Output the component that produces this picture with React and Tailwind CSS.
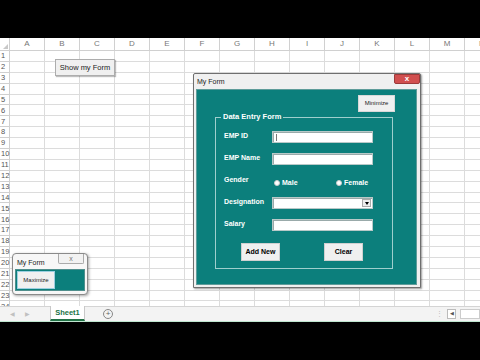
const COLS = ['A', 'B', 'C', 'D', 'E', 'F', 'G', 'H', 'I', 'J', 'K', 'L', 'M', 'N']
const ROWS = Array.from({ length: 24 }, (_, i) => i + 1)

function SheetGrid() {
  return (
    <div className="flex flex-col">
      <div className="flex h-[13px] shrink-0 bg-white">
        <div className="relative w-[10px] shrink-0 border-r border-b border-[#d0d0d0]">
          <div className="absolute right-[1px] bottom-[1px] h-0 w-0 border-l-[5px] border-t-[5px] border-l-transparent border-t-transparent border-r-0 border-b-[5px] border-b-[#c8c8c8] border-r-transparent" />
        </div>
        {COLS.map((c) => (
          <div key={c} className="flex w-[35px] shrink-0 items-center justify-center border-r border-b border-[#d0d0d0] text-[8px] text-[#777]">
            {c}
          </div>
        ))}
      </div>
      {ROWS.map((r) => (
        <div key={r} className="flex h-[10.9px] shrink-0">
          <div className="flex w-[10px] shrink-0 items-center pl-[1px] border-r border-b border-[#d0d0d0] text-[7.5px] leading-none text-[#555]">
            {r}
          </div>
          {COLS.map((c) => (
            <div key={c} className="w-[35px] shrink-0 border-r border-b border-[#dcdcdc]" />
          ))}
        </div>
      ))}
    </div>
  )
}

function TextBox({ cursor }) {
  return (
    <div className="flex h-[12px] w-[101px] items-center border border-[#b9c9c8] bg-white pl-[3px] shadow-[inset_1px_1px_0_#9aa]">
      {cursor && <div className="h-[7px] w-px bg-[#777]" />}
    </div>
  )
}

function Radio({ label }) {
  return (
    <div className="flex items-center gap-[2px]">
      <div className="h-[6px] w-[6px] rounded-full border border-[#ccc] bg-white" />
      <span className="text-[7px] font-bold text-white">{label}</span>
    </div>
  )
}

function FormWindow() {
  return (
    <div className="absolute left-[193px] top-[35px] flex h-[215px] w-[228px] flex-col rounded-t-[2px] border border-[#6f6f6f] bg-[#f0f0f0] pl-[2px] pr-[3px] pb-[2px] shadow-[1px_1px_2px_rgba(0,0,0,0.4)]">
      <div className="flex h-[15px] shrink-0 items-start justify-between">
        <span className="pl-[1px] pt-[4px] text-[7px] leading-none text-[#222]">My Form</span>
        <div className="mr-[-3px] flex h-[10px] w-[26px] items-center justify-center rounded-b-[2px] border border-[#9c3a3a] bg-[#d14f4f] text-[8px] font-bold leading-none text-white">
          x
        </div>
      </div>
      <div className="flex flex-1 flex-col border border-[#5e9c9a] bg-[#0c7f7c]">
        <div className="flex justify-end pr-[21px] pt-[5px]">
          <div className="flex h-[17px] w-[37px] items-center justify-center border border-[#d8d8d8] bg-[#f0f0f0] text-[6px] text-[#222]">
            Minimize
          </div>
        </div>
        <div className="relative ml-[18px] mt-[5px] flex h-[152px] w-[178px] flex-col border-[1.5px] border-[#9fcfcd] pl-[8px] pt-[13px]">
          <span className="absolute left-[5px] top-[-6px] bg-[#0c7f7c] px-[2px] text-[7.5px] font-bold leading-[10px] text-white">
            Data Entry Form
          </span>
          <div className="flex flex-col gap-[9px]">
            <div className="flex h-[13px] items-start">
              <span className="w-[48px] text-[7px] font-bold leading-[10px] text-white">EMP ID</span>
              <TextBox cursor />
            </div>
            <div className="flex h-[13px] items-start">
              <span className="w-[48px] text-[7px] font-bold leading-[10px] text-white">EMP Name</span>
              <TextBox />
            </div>
            <div className="flex h-[13px] items-start">
              <span className="w-[50px] text-[7px] font-bold leading-[10px] text-white">Gender</span>
              <div className="mt-[3px] w-[62px]">
                <Radio label="Male" />
              </div>
              <div className="mt-[3px]">
                <Radio label="Female" />
              </div>
            </div>
            <div className="flex h-[13px] items-start">
              <span className="w-[48px] text-[7px] font-bold leading-[10px] text-white">Designation</span>
              <div className="flex h-[12px] w-[101px] justify-end border border-[#b9c9c8] bg-white shadow-[inset_1px_1px_0_#9aa]">
                <div className="m-[1px] flex w-[9px] items-center justify-center border border-[#aaa] bg-[#eee]">
                  <div className="h-0 w-0 border-x-[2px] border-t-[3px] border-x-transparent border-t-black" />
                </div>
              </div>
            </div>
            <div className="flex h-[13px] items-start">
              <span className="w-[48px] text-[7px] font-bold leading-[10px] text-white">Salary</span>
              <TextBox />
            </div>
          </div>
          <div className="mt-[11px] flex gap-[44px] pl-[17px]">
            <div className="flex h-[18px] w-[39px] items-center justify-center border border-[#d0d0d0] bg-[#f0f0f0] text-[7px] font-bold text-black">
              Add New
            </div>
            <div className="flex h-[18px] w-[39px] items-center justify-center border border-[#d0d0d0] bg-[#f0f0f0] text-[7px] font-bold text-black">
              Clear
            </div>
          </div>
        </div>
      </div>
    </div>
  )
}

function MiniWindow() {
  return (
    <div className="absolute left-[12px] top-[215px] flex h-[42px] w-[76px] flex-col rounded-[4px] border border-[#8a8a8a] bg-[#f7f7f7] px-[2px] pb-[3px] shadow-[1px_1px_3px_rgba(0,0,0,0.35)]">
      <div className="flex h-[15px] items-start justify-between">
        <span className="pl-[2px] pt-[5px] text-[7px] leading-none text-[#222]">My Form</span>
        <div className="mr-[1px] flex h-[10px] w-[26px] items-center justify-center rounded-b-[2px] border border-[#aaa] border-t-0 bg-[#f2f2f2] text-[7px] leading-none text-[#777]">
          x
        </div>
      </div>
      <div className="flex flex-1 items-center border border-[#4f8f8d] bg-[#0c7f7c] pl-[1px]">
        <div className="flex h-[18px] w-[38px] items-center justify-center border border-[#9ccfe0] bg-[#f0f0f0] text-[6px] text-[#222]">
          Maximize
        </div>
      </div>
    </div>
  )
}

export default function App() {
  return (
    <div className="flex h-[360px] w-[480px] flex-col overflow-hidden bg-black" style={{ fontFamily: '"Liberation Sans", Arial, sans-serif' }}>
      <div className="h-[38px] shrink-0" />
      <div className="relative h-[268px] shrink-0 overflow-hidden bg-white">
        <SheetGrid />
        <div className="absolute left-[55px] top-[21px] flex h-[17px] w-[60px] items-center justify-center border border-[#adadad] bg-[#f0f0f0] text-[7.5px] text-[#222] shadow-[1px_1px_1px_rgba(0,0,0,0.25)]">
          Show my Form
        </div>
        <FormWindow />
        <MiniWindow />
      </div>
      <div className="flex h-[15px] shrink-0 items-stretch border-t border-[#d4d4d4] bg-[#f3f3f3]">
        <div className="flex w-[50px] items-center gap-[10px] pl-[10px] text-[6px] text-[#c0c0c0]">
          <span>◀</span>
          <span>▶</span>
        </div>
        <div className="mt-[-1px] flex w-[35px] items-center justify-center border-x border-b-2 border-[#c8c8c8] border-b-[#217346] bg-white text-[7.5px] font-bold text-[#217346]">
          Sheet1
        </div>
        <div className="flex flex-1 items-center pl-[18px]">
          <div className="flex h-[10px] w-[10px] items-center justify-center rounded-full border border-[#888] text-[8px] leading-none text-[#666]">
            +
          </div>
        </div>
        <div className="flex items-center gap-[4px]">
          <span className="text-[7px] text-[#bbb]">⋮</span>
          <div className="flex h-[10px] w-[9px] items-center justify-center border border-[#bbb] bg-white text-[5px] text-[#555]">◀</div>
          <div className="h-[10px] w-[20px] border border-[#ccc] bg-white" />
        </div>
      </div>
      <div className="h-px shrink-0 bg-[#bfe5cf]" />
    </div>
  )
}
